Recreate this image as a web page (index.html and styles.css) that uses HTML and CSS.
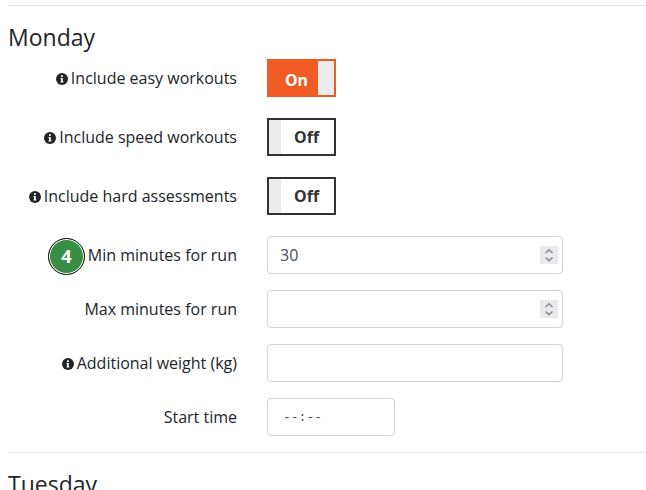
FILE: index.html
```html
<!DOCTYPE html>
<html lang="en">
<head>
    <meta charset="UTF-8">
    <meta name="viewport" content="width=device-width, initial-scale=1.0">
    <title>Workout Schedule</title>
    <link rel="stylesheet" href="styles.css">
</head>
<body>
    <!-- Shared icons -->
    <svg class="icon-defs" width="0" height="0" aria-hidden="true">
        <symbol id="info" viewBox="0 0 12 12">
            <circle cx="6" cy="6" r="6" fill="#212529"/>
            <path d="M5 2.2h1.8v1.7H5zM4.5 5h2.3v3.4h.7v1.1h-3V8.4H5V6h-.5z" fill="#fff"/>
        </symbol>
        <symbol id="spinner" viewBox="0 0 18 18">
            <path d="M5.5 7 9 3.8 12.5 7M5.5 11.5 9 14.7l3.5-3.2" fill="none" stroke="#8f8f9d" stroke-width="1.6"/>
        </symbol>
    </svg>

    <form class="schedule">
        <section class="day">
            <h3>Monday</h3>
            <div class="row row-toggle">
                <label class="name" for="easy"><svg class="info"><use href="#info"/></svg> Include easy workouts</label>
                <label class="toggle">
                    <input type="checkbox" id="easy" checked>
                    <span class="on">On</span>
                    <span class="off">Off</span>
                </label>
            </div>
            <div class="row row-toggle">
                <label class="name" for="speed"><svg class="info"><use href="#info"/></svg> Include speed workouts</label>
                <label class="toggle">
                    <input type="checkbox" id="speed">
                    <span class="on">On</span>
                    <span class="off">Off</span>
                </label>
            </div>
            <div class="row row-toggle">
                <label class="name" for="hard"><svg class="info"><use href="#info"/></svg> Include hard assessments</label>
                <label class="toggle">
                    <input type="checkbox" id="hard">
                    <span class="on">On</span>
                    <span class="off">Off</span>
                </label>
            </div>
            <div class="row">
                <label class="name" for="min"><span class="step">4</span> Min minutes for run</label>
                <div class="number">
                    <input class="field" type="number" id="min" value="30">
                    <svg class="spinner"><use href="#spinner"/></svg>
                </div>
            </div>
            <div class="row">
                <label class="name" for="max">Max minutes for run</label>
                <div class="number">
                    <input class="field" type="number" id="max">
                    <svg class="spinner"><use href="#spinner"/></svg>
                </div>
            </div>
            <div class="row">
                <label class="name" for="weight"><svg class="info"><use href="#info"/></svg> Additional weight (kg)</label>
                <input class="field" type="text" id="weight">
            </div>
            <div class="row">
                <label class="name" for="start">Start time</label>
                <input class="field time" type="text" id="start" placeholder="--:--">
            </div>
        </section>
        <section class="day">
            <h3>Tuesday</h3>
        </section>
    </form>
</body>
</html>
```

FILE: styles.css
```css
* {
    box-sizing: border-box;
}

html {
    overflow: hidden;
}

body {
    margin: 0;
    padding: 5px 0 0 8px;
    font-family: "Open Sans", "Noto Sans", sans-serif;
    font-size: 16px;
    line-height: 24px;
    color: #212529;
    background-color: #fff;
}

.icon-defs {
    position: absolute;
}

.day {
    border-top: 1px solid #e5e5e5;
    padding-top: 17px;
}

h3 {
    margin: 0 0 7px;
    font-size: 23px;
    font-weight: 400;
    line-height: 29px;
}

.row {
    display: grid;
    grid-template-columns: 229fr 296fr 53fr;
    column-gap: 30px;
    align-items: center;
    margin-bottom: 16px;
}

.row-toggle {
    margin-bottom: 21px;
}

.name {
    display: flex;
    align-items: center;
    justify-content: flex-end;
    gap: 3px;
    height: 38px;
    white-space: nowrap;
}

.info {
    width: 12px;
    height: 12px;
    margin-top: 1px;
}

.step {
    width: 37px;
    height: 37px;
    margin-top: 3px;
    border: 1px solid #111;
    border-radius: 50%;
    box-shadow: inset 0 0 0 1px #fff;
    background-color: #388e46;
    color: #fff;
    font-size: 18px;
    font-weight: 700;
    line-height: 34px;
    text-align: center;
}

.toggle {
    display: flex;
    justify-self: start;
    width: 69px;
    height: 38px;
    border: 2px solid #333;
    font-family: "Noto Sans", sans-serif;
    font-weight: 700;
    line-height: 34px;
    text-align: center;
    color: #333;
}

.toggle input {
    appearance: none;
    width: 12px;
    margin: 0;
    background-color: #ececec;
}

.toggle span {
    flex: 1;
    padding-right: 2px;
}

.toggle .on,
.toggle:has(:checked) .off {
    display: none;
}

.toggle:has(:checked) {
    border-color: #f05a24;
    background-color: #f05a24;
    color: #fff;
}

.toggle:has(:checked) input {
    order: 1;
    width: 16px;
}

.toggle:has(:checked) .on {
    display: block;
    padding: 2px 0 0 6px;
}

.number {
    position: relative;
}

.field {
    display: block;
    width: 100%;
    height: 38px;
    padding: 6px 12px;
    border: 1px solid #ced4da;
    border-radius: 4px;
    background-color: #fff;
    color: #495057;
    font: inherit;
    appearance: textfield;
}

.field::-webkit-inner-spin-button {
    display: none;
}

.spinner {
    position: absolute;
    top: 10px;
    right: 5px;
    width: 18px;
    height: 18px;
    background-color: #e9e9ed;
    pointer-events: none;
}

.time {
    width: 128px;
    padding-left: 15px;
    font-family: "Liberation Mono", monospace;
    font-size: 13px;
}

.time::placeholder {
    color: #495057;
}
```
